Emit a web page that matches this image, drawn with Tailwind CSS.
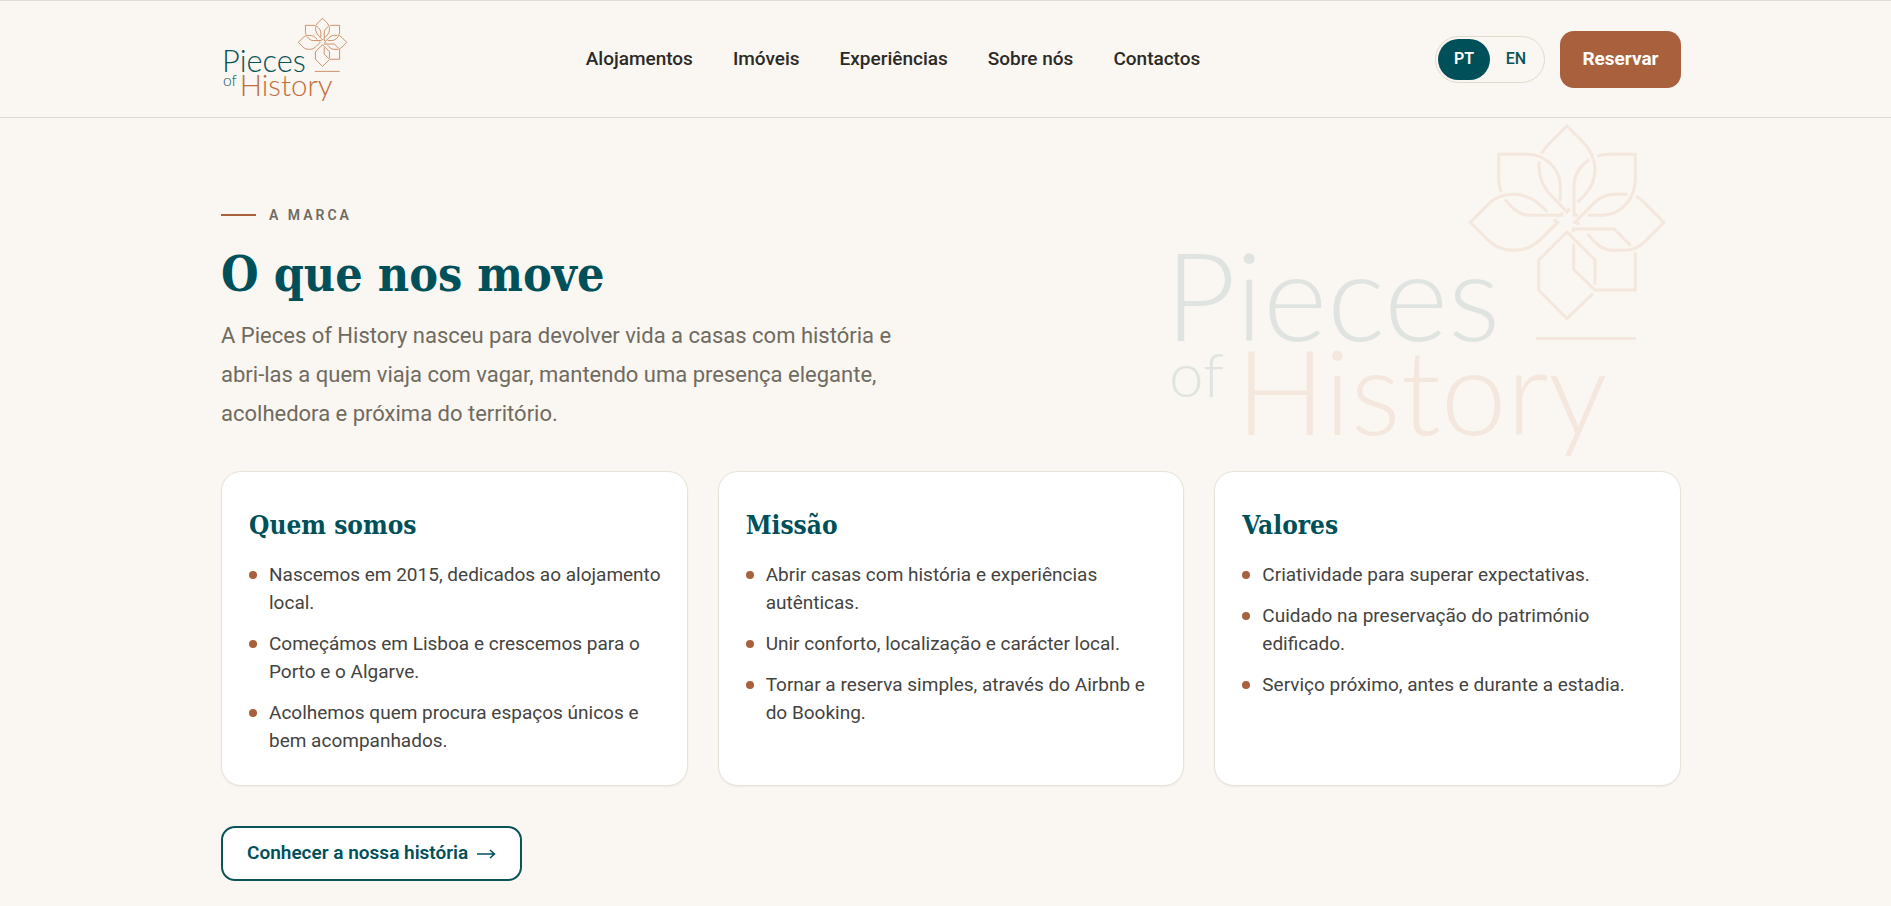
<!DOCTYPE html>
<html lang="pt">
<head>
<meta charset="utf-8">
<meta name="viewport" content="width=device-width, initial-scale=1">
<title>Pieces of History</title>
<script src="https://cdn.jsdelivr.net/npm/@tailwindcss/browser@4"></script>
</head>
<body class="min-h-screen bg-[#faf6f1] font-['Roboto',sans-serif] text-[#2b2a27] overflow-x-hidden">

<svg class="hidden" aria-hidden="true">
  <symbol id="logo" viewBox="0 0 520 352">
    <g font-family="Lato, sans-serif" font-weight="300">
      <text x="4" y="228" font-size="123" fill="#0a5357">Pieces</text>
      <text x="8" y="284" font-size="62" fill="#0a5357">of</text>
      <text x="75" y="322" font-size="118" fill="#c0703f">History</text>
    </g>
    <g fill="none" stroke="#c0703f">
      <path d="M375 225.500H475" stroke-width="3"/>
      <g transform="translate(289 2) scale(.33333)" stroke-width="9">
        <path d="M275 116C283 100 295 88 305 78L351 33L398 80C446 130 446 192 405 239L383 262M268 140C264 180 277 212 300 238L351 291L359 281"/>
        <path d="M153 231C146 214 146 200 146 190V118H230C290 118 331 165 331 215V258M165 253C190 286 215 301 240 301H335V292"/>
        <path d="M442 124C455 118 465 118 480 118H556V190C556 250 515 301 455 301H414M417 134C388 156 372 180 372 210V301H383"/>
        <path d="M291 290C260 255 230 238 193 238C160 238 137 247 120 263L61 322L116 377C142 402 168 406 193 406C230 406 255 390 275 370L323 322L311 314"/>
        <path d="M532 238H495C462 238 442 254 430 266L375 322L389 327M558 243C570 250 578 258 585 265L642 322L590 374C562 404 540 406 525 406H490C452 406 432 378 412 357"/>
        <path d="M370 350V342H493L542 391M556 411V525H435L371 463V386"/>
        <path d="M435 509V435L351 351L266 435V525L351 611L429 535"/>
      </g>
    </g>
  </symbol>
</svg>

<header class="relative z-10 border-y border-[#dfdad2] pl-[11px]">
  <div class="mx-auto flex h-[116px] w-full max-w-[1460px] items-center justify-between">
    <a href="#" aria-label="Pieces of History">
      <svg class="h-[88px] w-[130px]"><use href="#logo"/></svg>
    </a>
    <nav class="flex gap-10 text-[19px] leading-7 font-medium">
      <a href="#">Alojamentos</a>
      <a href="#">Imóveis</a>
      <a href="#">Experiências</a>
      <a href="#">Sobre nós</a>
      <a href="#">Contactos</a>
    </nav>
    <div class="flex items-center gap-[15px]">
      <div class="flex rounded-full border border-[#e2dacd] p-[2px] text-base text-[#0a5357]">
        <button class="h-[41px] w-[52px] rounded-full bg-[#00505a] font-semibold text-white">PT</button>
        <button class="h-[41px] w-[52px] rounded-full font-medium">EN</button>
      </div>
      <button class="h-[57px] w-[121px] rounded-[14px] bg-[#a9613d] text-[19px] font-bold text-white">Reservar</button>
    </div>
  </div>
</header>

<main class="pl-[11px]">
  <section class="relative mx-auto w-full max-w-[1460px] pt-[86px] pb-6">
    <svg class="absolute -top-[5px] right-0 h-[352px] w-[520px] opacity-10" aria-hidden="true"><use href="#logo"/></svg>

    <div class="relative">
      <p class="flex items-center gap-[13px] text-sm leading-[22px] font-semibold tracking-[3px] text-[#706b60]">
        <span class="h-[2px] w-[35px] bg-[#a9613d]"></span>A MARCA
      </p>
      <h1 class="mt-4 font-['Roboto_Slab','DejaVu_Serif_Condensed','DejaVu_Serif',serif] text-5xl leading-[64px] font-semibold text-[#00505a]">O que nos move</h1>
      <p class="mt-[10px] max-w-[700px] text-[22px] leading-[39px] text-[#706b60]">A Pieces of History nasceu para devolver vida a casas com história e abri-las a quem viaja com vagar, mantendo uma presença elegante, acolhedora e próxima do território.</p>
    </div>

    <div class="relative mt-[38px] grid grid-cols-3 gap-[30px]">
      <article class="rounded-[20px] border border-[#e9e2d8] bg-white pt-[31px] pr-6 pb-[30px] pl-[27px] shadow-xs">
        <h2 class="font-['Roboto_Slab','DejaVu_Serif_Condensed','DejaVu_Serif',serif] text-[26px] leading-[44px] font-semibold text-[#00505a]">Quem somos</h2>
        <ul class="mt-[14px] flex flex-col gap-[13px] text-[19px] leading-7 text-[#44433f]">
          <li class="flex gap-3"><span class="mt-[10px] size-2 shrink-0 rounded-full bg-[#a9613d]"></span>Nascemos em 2015, dedicados ao alojamento local.</li>
          <li class="flex gap-3"><span class="mt-[10px] size-2 shrink-0 rounded-full bg-[#a9613d]"></span>Começámos em Lisboa e crescemos para o Porto e o Algarve.</li>
          <li class="flex gap-3"><span class="mt-[10px] size-2 shrink-0 rounded-full bg-[#a9613d]"></span>Acolhemos quem procura espaços únicos e bem acompanhados.</li>
        </ul>
      </article>
      <article class="rounded-[20px] border border-[#e9e2d8] bg-white pt-[31px] pr-6 pb-[30px] pl-[27px] shadow-xs">
        <h2 class="font-['Roboto_Slab','DejaVu_Serif_Condensed','DejaVu_Serif',serif] text-[26px] leading-[44px] font-semibold text-[#00505a]">Missão</h2>
        <ul class="mt-[14px] flex flex-col gap-[13px] text-[19px] leading-7 text-[#44433f]">
          <li class="flex gap-3"><span class="mt-[10px] size-2 shrink-0 rounded-full bg-[#a9613d]"></span>Abrir casas com história e experiências autênticas.</li>
          <li class="flex gap-3"><span class="mt-[10px] size-2 shrink-0 rounded-full bg-[#a9613d]"></span>Unir conforto, localização e carácter local.</li>
          <li class="flex gap-3"><span class="mt-[10px] size-2 shrink-0 rounded-full bg-[#a9613d]"></span>Tornar a reserva simples, através do Airbnb e do Booking.</li>
        </ul>
      </article>
      <article class="rounded-[20px] border border-[#e9e2d8] bg-white pt-[31px] pr-6 pb-[30px] pl-[27px] shadow-xs">
        <h2 class="font-['Roboto_Slab','DejaVu_Serif_Condensed','DejaVu_Serif',serif] text-[26px] leading-[44px] font-semibold text-[#00505a]">Valores</h2>
        <ul class="mt-[14px] flex flex-col gap-[13px] text-[19px] leading-7 text-[#44433f]">
          <li class="flex gap-3"><span class="mt-[10px] size-2 shrink-0 rounded-full bg-[#a9613d]"></span>Criatividade para superar expectativas.</li>
          <li class="flex gap-3"><span class="mt-[10px] size-2 shrink-0 rounded-full bg-[#a9613d]"></span>Cuidado na preservação do património edificado.</li>
          <li class="flex gap-3"><span class="mt-[10px] size-2 shrink-0 rounded-full bg-[#a9613d]"></span>Serviço próximo, antes e durante a estadia.</li>
        </ul>
      </article>
    </div>

    <a href="#" class="mt-10 inline-flex h-[55px] items-center gap-2 rounded-[14px] border-2 border-[#0a5357] bg-white px-6 text-[19px] font-semibold text-[#00505a]">
      Conhecer a nossa história
      <svg class="h-3 w-5" viewBox="0 0 20 12" fill="none" stroke="currentColor" stroke-width="1.500" aria-hidden="true"><path d="M1 6H18M14 2L18.500 6L14 10"/></svg>
    </a>
  </section>
</main>
</body>
</html>
